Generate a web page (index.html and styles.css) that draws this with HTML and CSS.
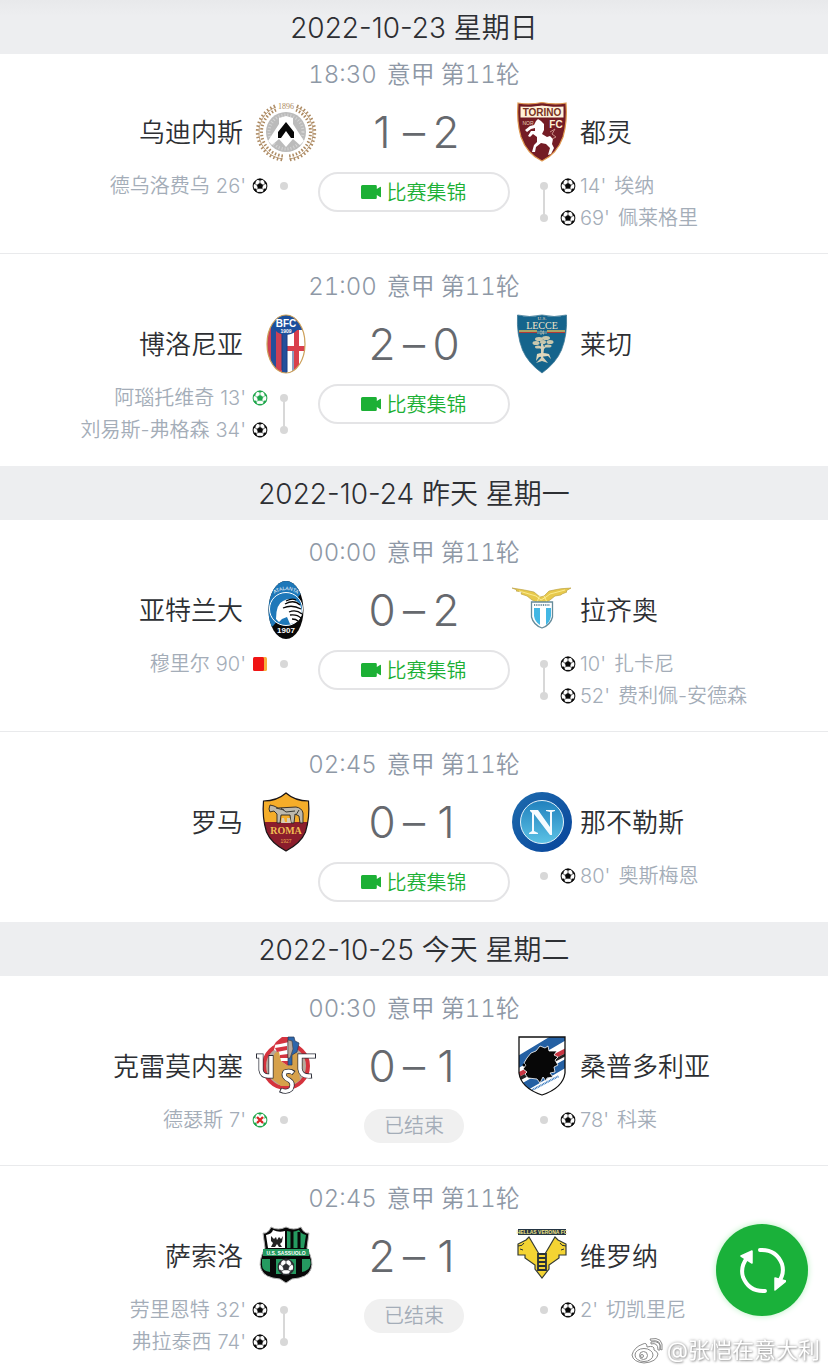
FILE: index.html
```html
<!DOCTYPE html>
<html lang="zh-CN">
<head>
<meta charset="utf-8">
<meta name="viewport" content="width=device-width, initial-scale=1">
<title>意甲赛程</title>
<link rel="stylesheet" href="styles.css">
</head>
<body>
<svg class="defs" aria-hidden="true">
  <symbol id="ball" viewBox="0 0 16 16">
    <circle cx="8" cy="8" r="6.9" fill="#fff" stroke="currentColor" stroke-width="1"/>
    <path d="M8 4.9l3 2.2-1.1 3.5H6.100L5 7.100zM5.200 1.300L8 2.600l2.800-1.300Q8 .200 5.200 1.300zM1 6.200l2-.4.900-2.900Q1.600 4 1 6.200zM15 6.200l-2-.4-.9-2.900Q14.400 4 15 6.200zM1.400 10.700l2.300.1 1.600 3.400Q2.500 13.500 1.400 10.700zM14.600 10.700l-2.300.1-1.600 3.400Q13.500 13.500 14.600 10.700zM6.400 14.200h3.200l.5.900H5.900z" fill="currentColor" stroke="currentColor" stroke-width=".4"/>
    <path d="M8 2.500v2.500M5 7.100L2.800 5.700M11 7.100l2.200-1.400M6.100 10.600l-2 .9M9.900 10.600l2 .9" fill="none" stroke="currentColor" stroke-width=".6"/>
  </symbol>
  <symbol id="camera" viewBox="0 0 20 14">
    <path d="M1.500 0h13q1.300 0 1.300 1.300V4L19 1.900q1-.4 1 .6v9q0 1-1 .6L15.800 10v2.700q0 1.300-1.300 1.300h-13Q0 14 0 12.500v-11Q0 0 1.500 0z" fill="#1cb035"/>
  </symbol>
</svg>

<main class="schedule">
  <section class="day">
    <h2 class="day-title day-title-top">2022-10-23 星期日</h2>
    <article class="match match-first">
      <p class="kickoff"><span>18:30</span><span>意甲</span><span>第11轮</span></p>
      <div class="teams">
        <div class="team home"><span>乌迪内斯</span>
          <svg class="crest" viewBox="0 0 60 60" role="img" aria-label="Udinese">
            <g fill="none" stroke="#ad8a62">
              <path d="M20 5A27 27 0 0 0 27 57M40 5A27 27 0 0 1 33 57" stroke-width=".8"/>
              <path d="M19 4A28 28 0 0 0 28 58M41 4A28 28 0 0 1 32 58" stroke-width="3" stroke-dasharray="1.500 2.300"/>
              <path d="M20 8A24 24 0 0 0 28 54M40 8A24 24 0 0 1 32 54" stroke-width="3" stroke-dasharray="1.500 1.900"/>
            </g>
            <circle cx="30" cy="30" r="20" fill="#bbb"/>
            <circle cx="30" cy="30" r="17" fill="none" stroke="#d4d4d4" stroke-width="3" stroke-dasharray="1 2"/>
            <path d="M23 16l7-2 7 2v6l11 17-4 4-7-6-7 8-7-8-7 6-4-4 11-17z" fill="#fff"/>
            <path d="M30 20l8 10v6h-3l-5-7-5 7h-3v-6z" fill="#080808"/>
            <text class="crest-serif text-sm" x="30" y="7" fill="#ad8a62">1896</text>
          </svg>
        </div>
        <p class="score"><span>1</span><span>–</span><span>2</span></p>
        <div class="team away">
          <svg class="crest" viewBox="0 0 60 60" role="img" aria-label="Torino">
            <path d="M6 1q12 2 24-.5Q42 3 54 1q1.500 19-3 34-6 17-21 24Q15 52 9 35 4.500 20 6 1z" fill="#741c25" stroke="#df984f" stroke-width="1.200"/>
            <path d="M8 4q11 1 22-1 11 2 22 1v12H8z" fill="#fff1d9" stroke="#701b22"/>
            <text class="crest-sans crest-bold text-md" x="30" y="14" fill="#783222">TORINO</text>
            <text class="crest-sans crest-bold text-md" x="44" y="26" fill="#fff0d4">FC</text>
            <text class="crest-sans text-xs" x="16" y="23" fill="#e7cfb5">NOR</text>
            <path d="M24 19l2-2 3 2 3 3 0 6-2 4 5 3 3-1 3 3-1 5 2 4-3 6-3 1 2-7-4-4-5-1-5 4-1 5-3 0 2-7 3-3 0-5-4-3-3 3-2-1 3-5 4 0 0-3-4 1-4 3-2-2 5-4 4-1z" fill="#fff"/>
            <path d="M38 30l5-3-3 5 4 3-4 2" stroke="#c98d85" fill="none"/>
          </svg>
          <span>都灵</span></div>
      </div>
      <div class="details">
        <ul class="events home">
          <li><span>德乌洛费乌</span><span>26'</span><svg class="icon"><use href="#ball"/></svg><i class="dot"></i></li>
        </ul>
        <div class="status"><button class="highlights" type="button"><svg class="camera"><use href="#camera"/></svg>比赛集锦</button></div>
        <ul class="events away">
          <li><i class="dot"></i><svg class="icon"><use href="#ball"/></svg><span>14'</span><span>埃纳</span></li>
          <li><i class="dot"></i><svg class="icon"><use href="#ball"/></svg><span>69'</span><span>佩莱格里</span></li>
        </ul>
      </div>
    </article>

    <article class="match">
      <p class="kickoff"><span>21:00</span><span>意甲</span><span>第11轮</span></p>
      <div class="teams">
        <div class="team home"><span>博洛尼亚</span>
          <svg class="crest" viewBox="0 0 60 60" role="img" aria-label="Bologna">
            <clipPath id="bologna"><ellipse cx="30" cy="30" rx="19" ry="29"/></clipPath>
            <g clip-path="url(#bologna)">
              <path d="M10 0h40v60H10z" fill="#234f9b"/>
              <path d="M10 12h5v48h-5zM20 12h6v48h-6z" fill="#ce4053"/>
              <path d="M31 16h20v44H31z" fill="#fff"/>
              <path d="M38 16h5v44h-5zM31 32h20v5H31z" fill="#d93f4c"/>
              <path d="M31 18v40M37 37v22M26 18v38" stroke="#183f84"/>
              <circle cx="30" cy="6" r="15" fill="#1b4f9c"/>
            </g>
            <ellipse cx="30" cy="30" rx="19" ry="29" fill="none" stroke="#cfa158" stroke-width="1.200"/>
            <text class="crest-sans crest-bold text-md" x="30" y="13" fill="#fff">BFC</text>
            <text class="crest-sans crest-bold text-xs" x="30" y="19" fill="#fff">1909</text>
          </svg>
        </div>
        <p class="score"><span>2</span><span>–</span><span>0</span></p>
        <div class="team away">
          <svg class="crest" viewBox="0 0 60 60" role="img" aria-label="Lecce">
            <path d="M5.500 1q12 3 24.500 0 12 3 24.500 0 1 20-5 35Q44 49 30 59 16 49 10.500 36q-6-15-5-35z" fill="#15648c" stroke="#3d7895" stroke-width=".8"/>
            <text class="crest-serif text-xs" x="30" y="6" fill="#e9d9bd">U.S.</text>
            <text class="crest-serif text-md" x="30" y="15" fill="#f3e6ca">LECCE</text>
            <path d="M7 17h46" stroke="#dbbd58" stroke-width="1.500"/><path d="M7 18.500h46" stroke="#b43838" stroke-width="1.200"/>
            <path d="M25 16h10v5H25z" fill="#15648c"/>
            <path d="M26 17v3M28 17h2v3h-2zM31 17h1v3h-1zM34 17v3" fill="none" stroke="#e9d9bd" stroke-width=".6"/>
            <g fill="#c9c8ae"><ellipse cx="24" cy="29" rx="3.500" ry="2"/><ellipse cx="27" cy="25" rx="4" ry="2"/><ellipse cx="34" cy="24" rx="4" ry="2"/><ellipse cx="38" cy="28" rx="3.500" ry="2"/><ellipse cx="31" cy="28" rx="3" ry="2"/><ellipse cx="26" cy="33" rx="3" ry="1.500"/><ellipse cx="36" cy="32" rx="3.500" ry="1.500"/></g>
            <path d="M29 30h2l1 3 4-2-4 4-1 8 5 6-6-2-6 2 5-5 0-9-4-3 4 1z" fill="#d6d1b9"/>
            <path d="M25 40q5-2 12 0l2 5-3-3-9 1-3 4z" fill="#e1d8bc"/>
          </svg>
          <span>莱切</span></div>
      </div>
      <div class="details">
        <ul class="events home">
          <li><span>阿瑙托维奇</span><span>13'</span><svg class="icon penalty"><use href="#ball"/></svg><i class="dot"></i></li>
          <li><span>刘易斯-弗格森</span><span>34'</span><svg class="icon"><use href="#ball"/></svg><i class="dot"></i></li>
        </ul>
        <div class="status"><button class="highlights" type="button"><svg class="camera"><use href="#camera"/></svg>比赛集锦</button></div>
        <ul class="events away"></ul>
      </div>
    </article>
  </section>

  <section class="day">
    <h2 class="day-title">2022-10-24 昨天 星期一</h2>
    <article class="match">
      <p class="kickoff"><span>00:00</span><span>意甲</span><span>第11轮</span></p>
      <div class="teams">
        <div class="team home"><span>亚特兰大</span>
          <svg class="crest" viewBox="0 0 60 60" role="img" aria-label="Atalanta">
            <clipPath id="atalanta"><ellipse cx="30" cy="30" rx="17.500" ry="29"/></clipPath>
            <g clip-path="url(#atalanta)">
              <path d="M10 0h40v60H10z" fill="#080808"/><path d="M10 0h40v8L17 46l-7 4z" fill="#1e78b9"/>
              <circle cx="30" cy="29" r="16.500" fill="#1e78b9" stroke="#fff"/>
              <path d="M20 39q0-15 7-18 8-5 16 2 4 6 2 14-4 7-11 7l-3-7-5 2-3 3z" fill="#fff"/>
              <path d="M29 24q9-5 15 1M27 28q9-4 18 1M33 32q7-3 13 2M34 35q7-1 11 3M36 39q4 0 6 2M30 21q6-3 10-1" fill="none" stroke="#080808" stroke-width="1.300"/>
            </g>
            <path id="atalanta-arc" d="M17 15Q30 5 43 15" fill="none"/>
            <text class="crest-sans text-xs" fill="#fff"><textPath href="#atalanta-arc" startOffset="50%">ATALANTA</textPath></text>
            <text class="crest-sans crest-bold text-sm" x="30" y="53" fill="#fff">1907</text>
          </svg>
        </div>
        <p class="score"><span>0</span><span>–</span><span>2</span></p>
        <div class="team away">
          <svg class="crest" viewBox="0 0 60 60" role="img" aria-label="Lazio">
            <path d="M0 8q14 2 22 4l6 5 4-1 5-5q12-3 22-3l-5 3 1 1-5 2-1 1-6 1-5 4-6 4-5-1-7-3-5-4-6-2 1-2-6-1 1-1z" fill="#e7c94b" stroke="#b59b3a" stroke-width=".6"/>
            <path d="M7 11l17 5 5 4 5-3 4-3 15-4M28 15l-3 7M32 16l3 6" fill="none" stroke="#fff2a0" stroke-width=".8"/>
            <path d="M19.500 22h21v15q-2 8-10.500 11-8.500-3-10.500-11z" fill="#fff" stroke="#668b9a" stroke-width="1.300"/>
            <path d="M22 28h6v17q-5-3-6-9zM34 28h5v8q-1 6-5 9z" fill="#42b7e4"/>
            <path d="M22 25h16" stroke="#7390a0" stroke-width="2" stroke-dasharray="1 .8"/>
          </svg>
          <span>拉齐奥</span></div>
      </div>
      <div class="details">
        <ul class="events home">
          <li><span>穆里尔</span><span>90'</span><svg class="icon" viewBox="0 0 16 16"><rect x="3" y="1" width="12" height="14" rx="1.500" fill="#f7b03d"/><rect x="1" y="1" width="11" height="14" rx="1.500" fill="#f01414"/></svg><i class="dot"></i></li>
        </ul>
        <div class="status"><button class="highlights" type="button"><svg class="camera"><use href="#camera"/></svg>比赛集锦</button></div>
        <ul class="events away">
          <li><i class="dot"></i><svg class="icon"><use href="#ball"/></svg><span>10'</span><span>扎卡尼</span></li>
          <li><i class="dot"></i><svg class="icon"><use href="#ball"/></svg><span>52'</span><span>费利佩-安德森</span></li>
        </ul>
      </div>
    </article>

    <article class="match">
      <p class="kickoff"><span>02:45</span><span>意甲</span><span>第11轮</span></p>
      <div class="teams">
        <div class="team home"><span>罗马</span>
          <svg class="crest" viewBox="0 0 60 60" role="img" aria-label="Roma">
            <path d="M7.500 9Q21 9 30 1q9 8 22.500 8 1.500 16-3 31Q45 51 30 59 15 51 10.500 40 6 25 7.500 9z" fill="#8b1d2c"/>
            <path d="M7.500 9Q21 9 30 1q9 8 22.500 8 .8 11-.5 21H8Q7 19 7.500 9z" fill="#f5ad29"/>
            <path d="M7.500 9Q21 9 30 1q9 8 22.500 8 1.500 16-3 31Q45 51 30 59 15 51 10.500 40 6 25 7.500 9z" fill="none" stroke="#191416" stroke-width="1.200"/>
            <path d="M13 17l1-4 4 1 4 2 18-1q6 1 7 6v10h-3l-1-7-4-2-1 9h-3l-1-8-9 0-1 8h-3l0-9-3-3-4 1z" fill="#bdb9ad" stroke="#282420" stroke-width=".9"/>
            <path d="M20 16l8 2M25 16l5 4 9-1M43 18l-3 5" stroke="#393935" fill="none"/>
            <path d="M25 31l1-5 2 0 1 4 2 0 0-4 3 0 1 5z" fill="#d7cbb5"/>
            <text class="crest-serif crest-bold text-md" x="30" y="42" fill="#f1bd53">ROMA</text>
            <text class="crest-sans text-xs" x="30" y="51" fill="#e5a74d">1927</text>
          </svg>
        </div>
        <p class="score"><span>0</span><span>–</span><span>1</span></p>
        <div class="team away">
          <svg class="crest" viewBox="0 0 60 60" role="img" aria-label="Napoli">
            <defs>
              <linearGradient id="napoli-ring" x2="1" y2="1"><stop stop-color="#1e6cae"/><stop offset="1" stop-color="#07439a"/></linearGradient>
              <linearGradient id="napoli-core" y2="1" x2="0"><stop stop-color="#2080bd"/><stop offset="1" stop-color="#5cc2e5"/></linearGradient>
            </defs>
            <circle cx="30" cy="30" r="30" fill="url(#napoli-ring)"/>
            <circle cx="30" cy="30" r="21.500" fill="url(#napoli-core)" stroke="#e4f3fa" stroke-width="1"/>
            <path d="M18 18h8l12 17V20l-4-1v-1h9v1l-3 1v23h-2L22 22v17l4 2v1h-9v-1l3-2V21l-2-2z" fill="#f5fbff"/>
          </svg>
          <span>那不勒斯</span></div>
      </div>
      <div class="details">
        <ul class="events home"></ul>
        <div class="status"><button class="highlights" type="button"><svg class="camera"><use href="#camera"/></svg>比赛集锦</button></div>
        <ul class="events away">
          <li><i class="dot"></i><svg class="icon"><use href="#ball"/></svg><span>80'</span><span>奥斯梅恩</span></li>
        </ul>
      </div>
    </article>
  </section>

  <section class="day">
    <h2 class="day-title">2022-10-25 今天 星期二</h2>
    <article class="match">
      <p class="kickoff"><span>00:30</span><span>意甲</span><span>第11轮</span></p>
      <div class="teams">
        <div class="team home"><span>克雷莫内塞</span>
          <svg class="crest" viewBox="0 0 60 60" role="img" aria-label="Cremonese">
            <circle cx="30" cy="30" r="22" fill="#b7a99d" stroke="#d5333d" stroke-width="4"/>
            <path d="M19 17l7-4h9l9 6 3 10-4 7 1 8-9 6H25l-9-7 1-8-4-7z" fill="#d6a14b"/>
            <path d="M20 6l6-5h6v29l-7-5-2-9-5-2z" fill="#fff"/>
            <path d="M20 6l6-5h7v5l-9 2-6 1zM19 12l12-2v4l-10 2zM24 19l8-1v4h-8zM25 25h7v5z" fill="#d43340"/>
            <path d="M32 1h6l1 4 4 2-2 9-5 3v10h-4z" fill="#2d66aa" stroke="#293653" stroke-width=".7"/>
            <path d="M32 4l4 1 1 8-3 9h-2z" fill="#b7a99d" stroke="#493c37" stroke-width=".6"/>
            <g fill="none" stroke="#292b36" stroke-width="5">
              <path d="M0 20h5v14q1 6 7 6h3V19"/>
              <path d="M60 20H44v13q1 8 12 7"/>
              <path d="M38 37q-4-3-9-1-3 5 4 8 5 3 2 9-4 4-11 1"/>
            </g>
            <g fill="none" stroke="#fff" stroke-width="3.600">
              <path d="M1 20h4v14q1 6 7 6h3V20"/>
              <path d="M59 20H44v13q1 8 11 7"/>
              <path d="M37 37q-3-3-8-1-3 5 4 8 5 3 2 9-4 4-10 1"/>
            </g>
          </svg>
        </div>
        <p class="score"><span>0</span><span>–</span><span>1</span></p>
        <div class="team away">
          <svg class="crest" viewBox="0 0 60 60" role="img" aria-label="Sampdoria">
            <clipPath id="samp"><path d="M7 1h46v36q-2 15-23 22Q9 52 7 37z"/></clipPath>
            <g clip-path="url(#samp)">
              <path d="M0 0h60v60H0z" fill="#fff"/><path d="M4 21L44-3h12v6L5 33zM5 50l52-29v9L9 58z" fill="#2460a3"/>
              <path d="M5 37l51-26v5L5 42z" fill="#c93643"/><path d="M5 42l51-26v3L5 46z" fill="#222"/>
              <path d="M20 54l27-14" stroke="#3275bb" stroke-width="2" stroke-dasharray="1 .6"/>
            </g>
            <path d="M15 22l4-5 5-2 4-5 5 2 3-2 1 5 8 0-3 4 4 2-3 3 3 5-4 2 1 5-5 1 3 4-6 1-1 3-3-4-3 6-3-4-9-1-3-4 2-2-4-3 3-4-2-2z" fill="#070707" stroke="#fff" stroke-width=".8"/>
            <circle cx="12" cy="29" r="1.500"/>
            <path d="M7 1h46v36q-2 15-23 22Q9 52 7 37z" fill="none" stroke="#101010" stroke-width="1.300"/>
          </svg>
          <span>桑普多利亚</span></div>
      </div>
      <div class="details">
        <ul class="events home">
          <li><span>德瑟斯</span><span>7'</span><svg class="icon penalty" viewBox="0 0 16 16"><use href="#ball"/><circle cx="8" cy="8" r="4" fill="#fff"/><path d="M5 5l6 6M11 5l-6 6" stroke="#d92525" stroke-width="2.400"/></svg><i class="dot"></i></li>
        </ul>
        <div class="status"><span class="finished">已结束</span></div>
        <ul class="events away">
          <li><i class="dot"></i><svg class="icon"><use href="#ball"/></svg><span>78'</span><span>科莱</span></li>
        </ul>
      </div>
    </article>

    <article class="match match-end">
      <p class="kickoff"><span>02:45</span><span>意甲</span><span>第11轮</span></p>
      <div class="teams">
        <div class="team home"><span>萨索洛</span>
          <svg class="crest" viewBox="0 0 60 60" role="img" aria-label="Sassuolo">
            <path d="M7 7q5 1 8-6 7 4 15 0 8 4 15 0 3 7 8 6l-2 15q7 13 4 21-3 9-19 10l-6 4-6-4Q8 52 5 43q-3-8 4-21z" fill="#080808" stroke="#b5b5b5" stroke-width="1"/>
            <path d="M10 9q6-1 7-5 6 3 12 1v17H12z" fill="#fff"/>
            <path d="M31 5q6 2 12-1 2 4 7 5l-2 13H31z" fill="#259a60"/>
            <path d="M36 5v17M43 6v16" stroke="#080808" stroke-width="3"/>
            <path d="M15 10l3 3 2-2 1 3 2-3 2 2 2-3-1 6-2 2 2 3h-3l-2-3-2 3h-4l2-4-2-2z" fill="#222"/>
            <path d="M7 23h46v7H7zM6 33h8v13q-8-1-8-7zM20 33h20v15H20zM46 33h8q3 11-8 13z" fill="#259a60"/>
            <text class="crest-sans crest-bold text-xs" x="30" y="29" fill="#fff">U.S. SASSUOLO</text>
            <svg x="21" y="32" width="18" height="18" viewBox="0 0 16 16"><use href="#ball"/></svg>
          </svg>
        </div>
        <p class="score"><span>2</span><span>–</span><span>1</span></p>
        <div class="team away">
          <svg class="crest" viewBox="0 0 60 60" role="img" aria-label="Hellas Verona">
            <path d="M6 3h48v6H6z" fill="#243543"/>
            <text class="crest-sans crest-bold text-xs" x="30" y="8" fill="#f0e58a">HELLAS VERONA FC</text>
            <path d="M17 11l10 17h6l10-17 3 3 8 4v11h-7v3l-10 7v4l-7 9-7-9v-4l-10-7v-3H6V18l8-4z" fill="#f4d433" stroke="#353b35" stroke-width="1.200"/>
            <path d="M26 28h8v16h-8zM26 32h8M26 36h8M26 40h8" fill="none" stroke="#283138" stroke-width="1.800"/>
            <path d="M6 20q5 0 6-3M8 23l3 1M54 20q-5 0-6-3M52 23l-3 1" fill="none" stroke="#283138"/>
          </svg>
          <span>维罗纳</span></div>
      </div>
      <div class="details">
        <ul class="events home">
          <li><span>劳里恩特</span><span>32'</span><svg class="icon"><use href="#ball"/></svg><i class="dot"></i></li>
          <li><span>弗拉泰西</span><span>74'</span><svg class="icon"><use href="#ball"/></svg><i class="dot"></i></li>
        </ul>
        <div class="status"><span class="finished">已结束</span></div>
        <ul class="events away">
          <li><i class="dot"></i><svg class="icon"><use href="#ball"/></svg><span>2'</span><span>切凯里尼</span></li>
        </ul>
      </div>
    </article>
  </section>
</main>

<button class="refresh" type="button" aria-label="刷新">
  <svg viewBox="0 0 48 48" aria-hidden="true">
    <path d="M22 4Q38 3 44 18q3 10-4 19M27 45Q11 46 5 31 2 21 9 12" fill="none" stroke="#fff" stroke-width="4" stroke-linecap="round"/>
    <path d="M3 10L14 5v12zM37 32l11 3-11 9z" fill="#fff" stroke="#fff" stroke-width="1.500" stroke-linejoin="round"/>
  </svg>
</button>

<p class="credit">
  <svg viewBox="0 0 32 28" aria-hidden="true">
    <g fill="#fff" stroke="#8b8b8b" stroke-width="1">
      <path d="M12 8Q3 11 1 19q1 7 12 8 13-1 14-9-1-3-4-4 1-5-7-3 0-5-4-3z"/>
      <ellipse cx="13" cy="19" rx="9" ry="6.500"/>
      <circle cx="12.500" cy="19.500" r="4"/><circle cx="11" cy="20" r="1.500"/>
      <path d="M20 8q7-2 7 6l2 0q2-10-9-8zM19 3Q33 0 31 14l-2-1Q31 3 20 5z"/>
    </g>
  </svg>
  <span>@张恺在意大利</span>
</p>
</body>
</html>
```
FILE: styles.css
```css
* {
  box-sizing: border-box;
}

body {
  margin: 0;
  background: #fff;
  color: #2d2f33;
  font-family: Inter, "Noto Sans CJK SC", sans-serif;
  font-weight: 350;
}

h2, p, ul {
  margin: 0;
  padding: 0;
}

button {
  font: inherit;
  cursor: pointer;
}

.defs {
  position: absolute;
  width: 0;
  height: 0;
}

.day-title {
  height: 54px;
  padding-top: 1px;
  background: #edeef0;
  font-size: 28px;
  font-weight: 350;
  line-height: 54px;
  text-align: center;
}

.day-title-top {
  background: linear-gradient(#e8e9eb, #edeef0 16px);
}

.match {
  padding: 17px 0 19px;
  border-bottom: 1px solid #e9eaec;
}

.match:last-child {
  border-bottom-color: transparent;
}

.match-first {
  padding-top: 5px;
}

.match-end {
  padding-bottom: 11px;
}

.kickoff {
  display: flex;
  justify-content: center;
  gap: 10px;
  color: #8e98a6;
  font-size: 24px;
  font-variant-numeric: tabular-nums;
  line-height: 32px;
}

.kickoff span + span + span {
  margin-left: -4px;
}

.teams,
.details {
  display: grid;
  grid-template-columns: minmax(0, 1fr) 196px minmax(0, 1fr);
}

.teams {
  align-items: center;
  margin-top: 11px;
}

.team {
  display: flex;
  align-items: center;
  font-size: 26px;
  line-height: 36px;
  white-space: nowrap;
}

.team span {
  padding-top: 2px;
}

.team.home {
  justify-content: flex-end;
  gap: 13px;
}

.team.away {
  gap: 8px;
}

.crest {
  flex: none;
  width: 60px;
  height: 60px;
  overflow: visible;
}

.crest text {
  text-anchor: middle;
}

.crest-sans {
  font-family: "Liberation Sans", sans-serif;
}

.crest-serif {
  font-family: "Liberation Serif", serif;
}

.crest-bold {
  font-weight: 700;
}

.text-xs {
  font-size: 5px;
}

.text-sm {
  font-size: 8px;
}

.text-md {
  font-size: 10px;
}

.score {
  display: flex;
  justify-content: center;
  gap: 4px;
  color: #66696e;
  font-size: 44px;
  line-height: 60px;
}

.score span {
  width: 28px;
  text-align: center;
}

.details {
  margin-top: 8px;
}

.events {
  color: #a4adb8;
  font-size: 20px;
  line-height: 32px;
  list-style: none;
  white-space: nowrap;
}

.events li {
  display: flex;
  align-items: center;
}

.events.home li {
  justify-content: flex-end;
  padding-right: 28px;
  gap: 6px;
}

.events.away li {
  padding-left: 28px;
  gap: 8px;
}

.events.home .dot {
  margin-left: 6px;
}

.events.away .icon {
  margin-left: 4px;
  margin-right: -4px;
}

.icon {
  flex: none;
  width: 16px;
  height: 16px;
  color: #080808;
}

.penalty {
  color: #1da64a;
}

.dot {
  position: relative;
  width: 8px;
  height: 8px;
  border-radius: 50%;
  background: #d8d8d8;
}

.events li + li .dot::before {
  content: "";
  position: absolute;
  left: 3px;
  bottom: 4px;
  width: 2px;
  height: 32px;
  background: #d8d8d8;
}

.status {
  display: flex;
  justify-content: center;
  align-items: center;
  align-self: start;
  height: 40px;
  margin-top: 2px;
}

.highlights {
  display: flex;
  justify-content: center;
  align-items: center;
  gap: 6px;
  width: 192px;
  height: 40px;
  padding: 0 1px 1px 0;
  border: 2px solid #e4e4e6;
  border-radius: 20px;
  background: #fff;
  color: #1cb035;
  font-size: 20px;
}

.camera {
  width: 20px;
  height: 14px;
}

.finished {
  width: 100px;
  border-radius: 17px;
  background: #f0f0f0;
  color: #a4adb8;
  font-size: 20px;
  line-height: 34px;
  text-align: center;
}

.refresh {
  position: fixed;
  right: 20px;
  bottom: 54px;
  display: grid;
  place-items: center;
  width: 92px;
  height: 92px;
  padding: 0;
  border: 0;
  border-radius: 50%;
  background: #1ab13a;
  box-shadow: 0 0 6px #b8f0c2;
}

.refresh svg {
  width: 48px;
  height: 48px;
}

.credit {
  position: fixed;
  right: 8px;
  bottom: 4px;
  display: flex;
  align-items: center;
  gap: 4px;
  color: #fff;
  font-size: 22px;
  font-weight: 400;
  line-height: 32px;
  text-shadow: 0 0 3px #999, 1px 1px 2px #aaa;
}

.credit svg {
  width: 32px;
  height: 28px;
}
```
